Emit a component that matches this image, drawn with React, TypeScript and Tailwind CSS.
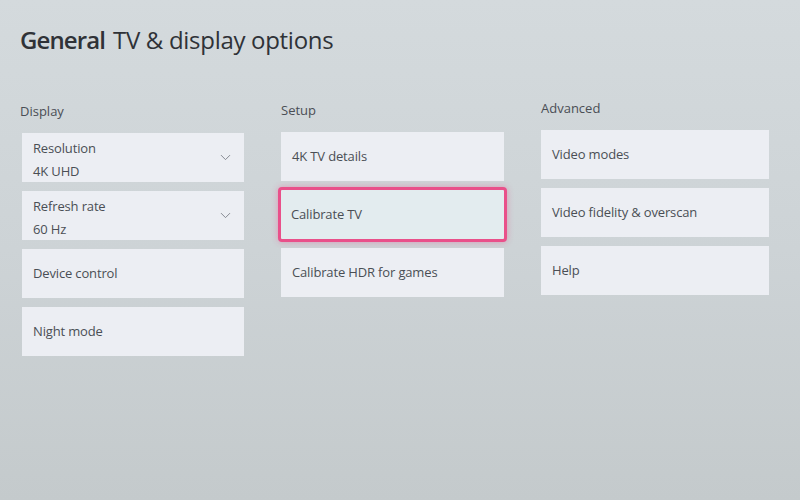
import { ChevronDown } from "lucide-react";

type Item = { label: string; value?: string; focused?: boolean };

const columns: { title: string; offset: string; items: Item[] }[] = [
  {
    title: "Display",
    offset: "pt-[3px] pl-[2px]",
    items: [
      { label: "Resolution", value: "4K UHD" },
      { label: "Refresh rate", value: "60 Hz" },
      { label: "Device control" },
      { label: "Night mode" },
    ],
  },
  {
    title: "Setup",
    offset: "pt-[2px]",
    items: [
      { label: "4K TV details" },
      { label: "Calibrate TV", focused: true },
      { label: "Calibrate HDR for games" },
    ],
  },
  {
    title: "Advanced",
    offset: "pt-[0px]",
    items: [
      { label: "Video modes" },
      { label: "Video fidelity & overscan" },
      { label: "Help" },
    ],
  },
];

function Tile({ item }: { item: Item }) {
  if (item.focused) {
    return (
      <div className="-mx-[3px] -my-[3px] flex h-[55px] items-center rounded-[4px] border-[3px] border-[#e9508a] bg-[#e3ecef] px-[10px] text-[13px] tracking-[-0.15px] text-[#4a4e55] shadow-[0_0_6px_rgba(233,80,138,0.45)]">
        {item.label}
      </div>
    );
  }
  return (
    <div className="flex h-[49px] items-center justify-between bg-[#eceef3] px-[11px] text-[13px] tracking-[-0.15px] text-[#4a4e55]">
      {item.value ? (
        <div className="mt-[3px] flex flex-col gap-[7px] leading-[16px]">
          <span>{item.label}</span>
          <span>{item.value}</span>
        </div>
      ) : (
        <span>{item.label}</span>
      )}
      {item.value && (
        <ChevronDown className="-mr-[1px] h-[17px] w-[17px] text-[#7d8189]" strokeWidth={1.3} />
      )}
    </div>
  );
}

export default function App() {
  return (
    <div
      className="h-[500px] w-[800px] overflow-hidden bg-gradient-to-b from-[#d4dadd] via-[#cdd3d6] to-[#c4cacc] px-[20px] pt-[25px]"
      style={{ fontFamily: '"Open Sans", "Noto Sans", sans-serif' }}
    >
      <h1 className="flex items-baseline gap-[8px] text-[24px] leading-[30px] text-[#2f3237]">
        <span className="font-semibold tracking-[-0.9px]">General</span>
        <span className="tracking-[-0.3px]">TV &amp; display options</span>
      </h1>

      <div className="mt-[45px] grid grid-cols-[224px_223px_228px] items-start gap-x-[37px]">
        {columns.map((col) => (
          <div key={col.title} className={col.offset}>
            <div
              className={
                col.title === "Display"
                  ? "-ml-[2px] mb-[14px] text-[13px] leading-[16px] text-[#4a4e55]"
                  : "mb-[14px] text-[13px] leading-[16px] text-[#4a4e55]"
              }
            >
              {col.title}
            </div>
            <div className="flex flex-col gap-[9px]">
              {col.items.map((it) => (
                <Tile key={it.label} item={it} />
              ))}
            </div>
          </div>
        ))}
      </div>
    </div>
  );
}
